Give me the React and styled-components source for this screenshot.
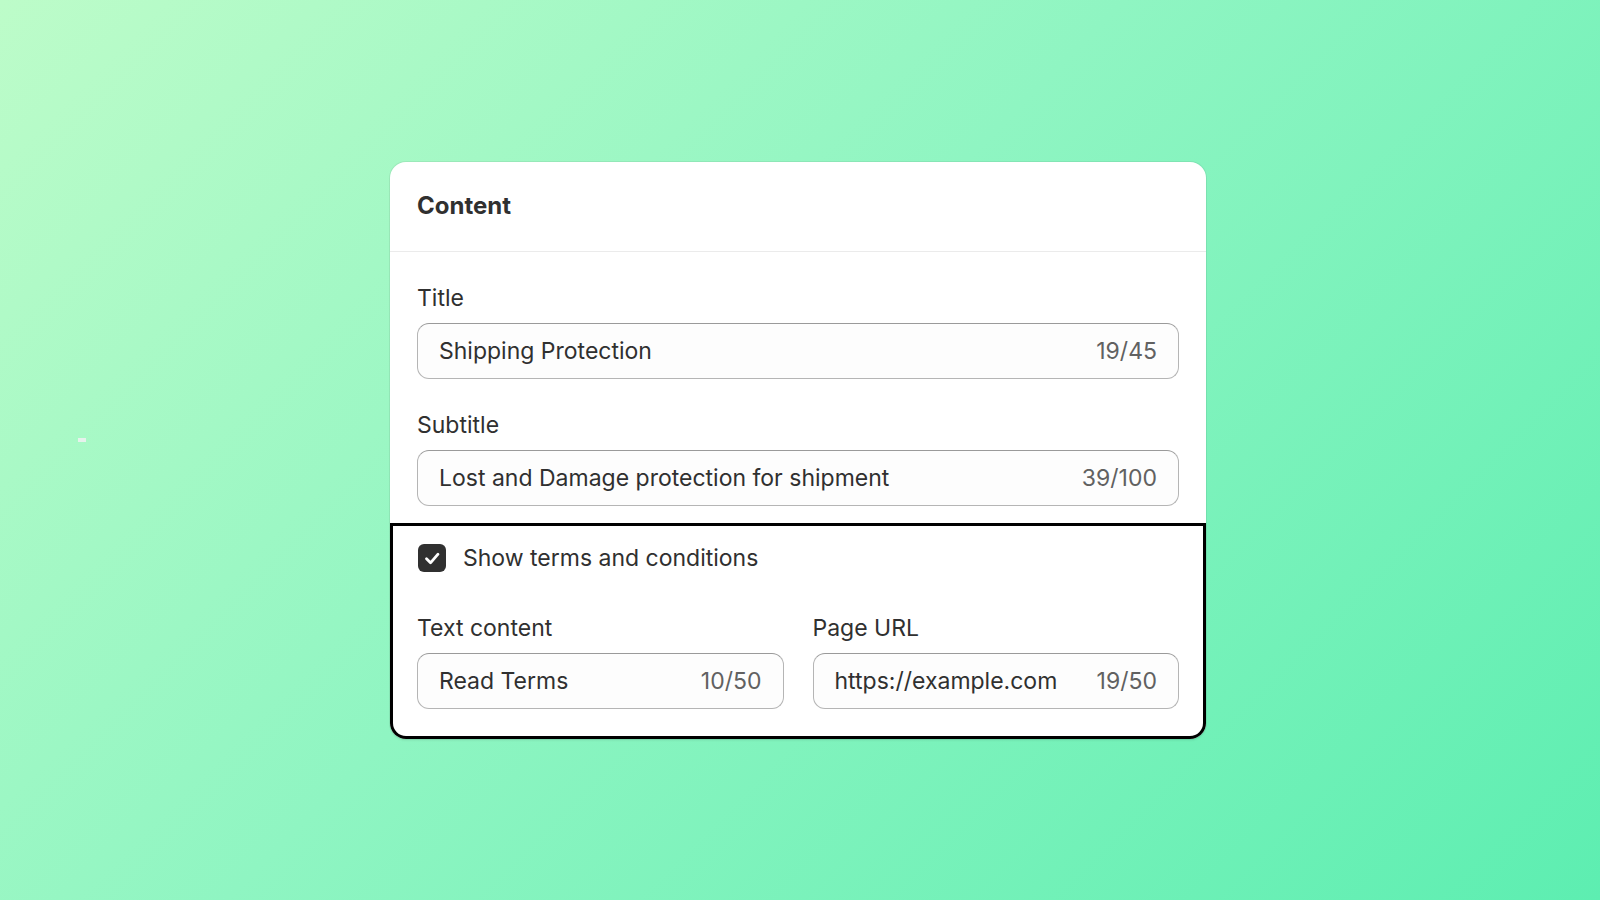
import React from "react";
import styled, { createGlobalStyle } from "styled-components";

const GlobalStyle = createGlobalStyle`
	html, body {
		margin: 0;
		padding: 0;
	}
	body {
		font-family: "Inter", "Noto Sans", sans-serif;
		color: #303030;
	}
	* {
		box-sizing: border-box;
	}
`;

const Page = styled.div`
	position: relative;
	width: 100%;
	height: 100vh;
	display: flex;
	align-items: center;
	justify-content: center;
	padding-right: 4px;
	background: linear-gradient(135deg, #bdfcc9 0%, #8ff5c2 45%, #5deeb1 100%);
`;

const Speck = styled.span`
	position: absolute;
	left: 78px;
	top: 438px;
	width: 8px;
	height: 4px;
	background-color: #e6f2ec;
`;

const Card = styled.div`
	width: 816px;
	background-color: #fff;
	border-radius: 16px;
	box-shadow: 0 0 0 1px rgba(0, 0, 0, 0.06), 0 2px 2px rgba(0, 0, 0, 0.05);
`;

const CardHeader = styled.div`
	height: 90px;
	display: flex;
	align-items: center;
	padding: 0 27px;
	border-bottom: 1px solid #ebebeb;
`;

const Heading = styled.h2`
	margin: 0;
	font-size: 24px;
	font-weight: 650;
	line-height: 30px;
	color: #303030;
`;

const CardBody = styled.div`
	display: flex;
	flex-direction: column;
	gap: 32px;
	padding: 32px 27px 17px;
`;

const Field = styled.div`
	display: flex;
	flex-direction: column;
	gap: 11px;
`;

const Label = styled.label`
	font-size: 23px;
	line-height: 28px;
	font-weight: 400;
	color: #303030;
`;

const InputBox = styled.div`
	height: 56px;
	display: flex;
	align-items: center;
	justify-content: space-between;
	padding: 0 21px;
	background-color: #fdfdfd;
	border: 1px solid #b5b5b5;
	border-top-color: #9a9a9a;
	border-radius: 12px;
	font-size: 23px;
	line-height: 28px;
`;

const Value = styled.span`
	color: #303030;
	white-space: nowrap;
`;

const Counter = styled.span`
	color: #616161;
	white-space: nowrap;
`;

const Section = styled.div`
	display: flex;
	flex-direction: column;
	gap: 42px;
	padding: 21px 27px 30px;
	border-radius: 0 0 16px 16px;
	box-shadow: inset 0 0 0 3px #000;
`;

const CheckRow = styled.label`
	display: flex;
	align-items: center;
	gap: 17px;
	padding-left: 1px;
	font-size: 23px;
	line-height: 28px;
	color: #303030;
`;

const CheckBox = styled.span`
	width: 28px;
	height: 28px;
	border-radius: 6px;
	background-color: #303030;
	display: flex;
	align-items: center;
	justify-content: center;
`;

const Columns = styled.div`
	display: grid;
	grid-template-columns: 1fr 1fr;
	gap: 29px;
`;

const TextField = ({ label, value, count }) => (
	<Field>
		<Label>{label}</Label>
		<InputBox>
			<Value>{value}</Value>
			<Counter>{count}</Counter>
		</InputBox>
	</Field>
);

const App = () => {
	return (
		<Page>
			<GlobalStyle />
			<Speck />
			<Card>
				<CardHeader>
					<Heading>Content</Heading>
				</CardHeader>
				<CardBody>
					<TextField label="Title" value="Shipping Protection" count="19/45" />
					<TextField
						label="Subtitle"
						value="Lost and Damage protection for shipment"
						count="39/100"
					/>
				</CardBody>
				<Section>
					<CheckRow>
						<CheckBox>
							<svg width="28" height="28" viewBox="0 0 28 28" fill="none">
								<path
									d="M8.5 14.8l4 4L20 10.2"
									stroke="#fff"
									strokeWidth="2.8"
									strokeLinecap="round"
									strokeLinejoin="round"
								/>
							</svg>
						</CheckBox>
						Show terms and conditions
					</CheckRow>
					<Columns>
						<TextField label="Text content" value="Read Terms" count="10/50" />
						<TextField label="Page URL" value="https://example.com" count="19/50" />
					</Columns>
				</Section>
			</Card>
		</Page>
	);
};

export default App;
